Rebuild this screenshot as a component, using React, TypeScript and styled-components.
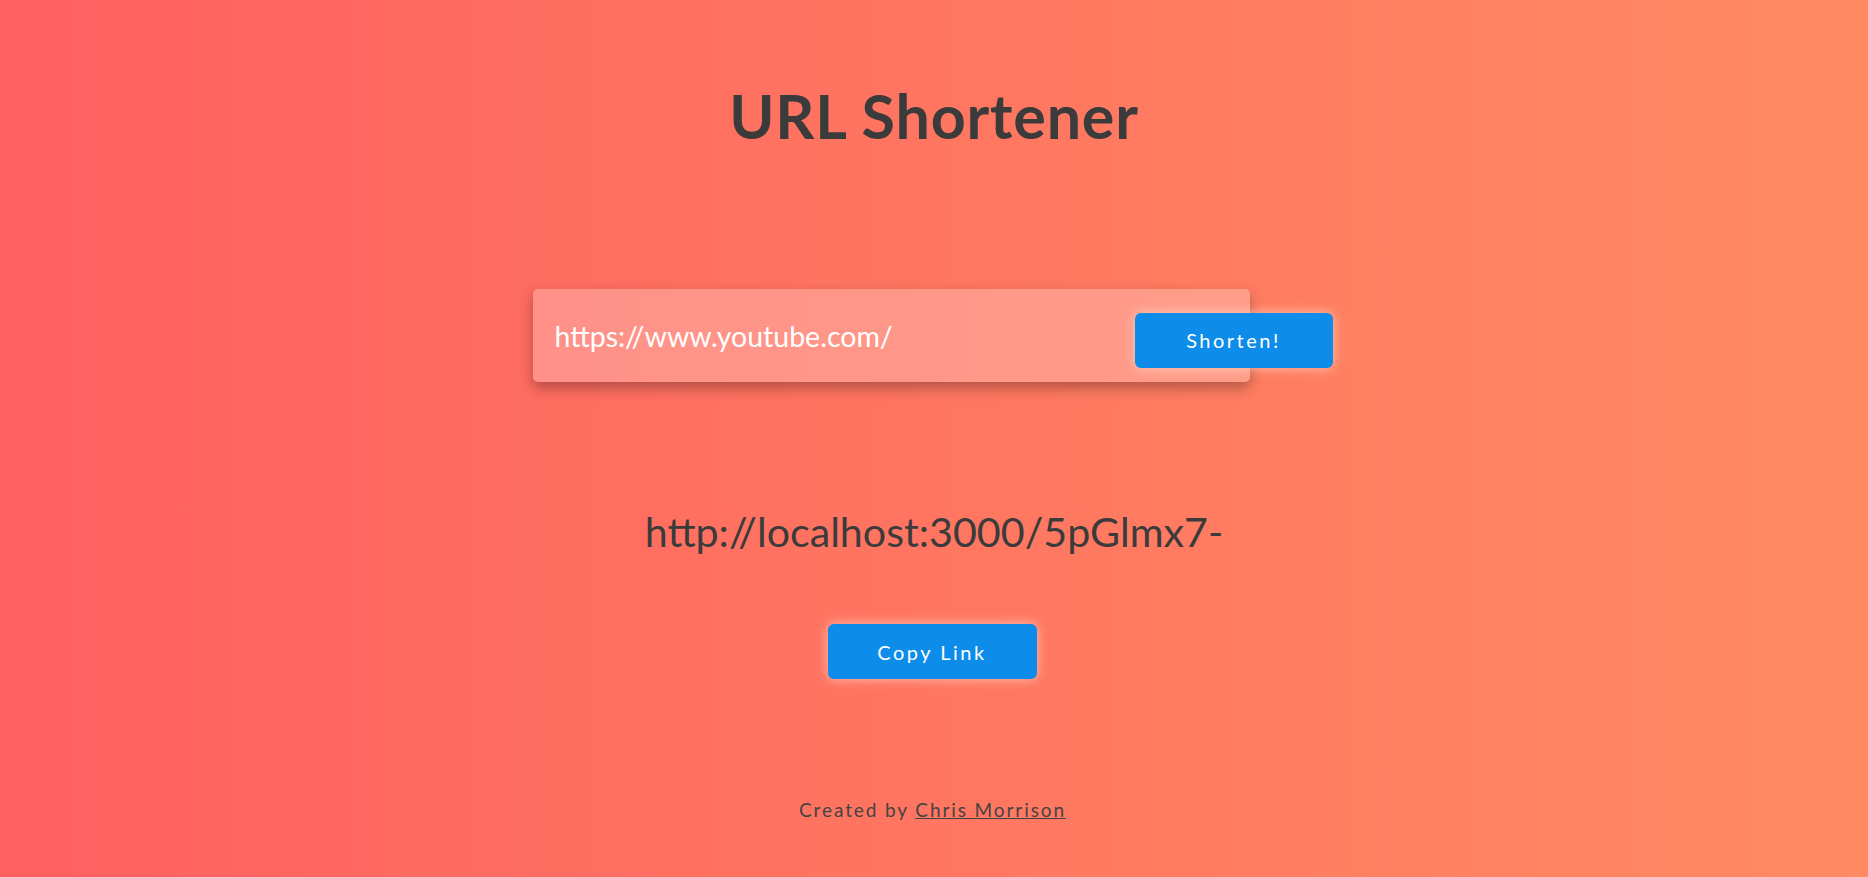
import React from "react";
import styled, { createGlobalStyle } from "styled-components";

const Global = createGlobalStyle`
  html, body { margin: 0; padding: 0; }
  body {
    font-family: Lato, "Open Sans", sans-serif;
    background: linear-gradient(to right, #ff6060, #ff8b62);
    min-height: 100vh;
  }
`;

const Page = styled.main`
  min-height: 877px;
  display: flex;
  flex-direction: column;
  align-items: center;
  box-sizing: border-box;
  padding-top: 72px;
`;

const Title = styled.h1`
  margin: 0;
  font-family: Lato, sans-serif;
  font-weight: 700;
  font-size: 61px;
  line-height: 88px;
  letter-spacing: 0.8px;
  color: #3b3b3b;
`;

const Form = styled.form`
  margin-top: 129px;
  width: 800px;
  display: flex;
  align-items: center;
  margin-left: -3px;
`;

const UrlInput = styled.input`
  flex: 0 0 717px;
  height: 93px;
  box-sizing: border-box;
  border: none;
  outline: none;
  border-radius: 5px;
  padding: 0 22px;
  background: rgba(255, 255, 255, 0.25);
  box-shadow: 0 6px 14px rgba(0, 0, 0, 0.3);
  font-family: Lato, sans-serif;
  font-size: 28.5px;
  color: #ffffff;
`;

const Button = styled.button<{ $w: number }>`
  width: ${(p) => p.$w}px;
  height: 55px;
  border: none;
  border-radius: 6px;
  background: #0d8ce9;
  color: #ffffff;
  font-family: Lato, sans-serif;
  font-size: 20px;
  letter-spacing: 2.5px;
  box-shadow: 0 0 12px rgba(255, 220, 200, 0.75);
  cursor: pointer;
`;

const ShortenButton = styled(Button)`
  margin-left: -115px;
  margin-top: 9px;
  position: relative;
`;

const Result = styled.p`
  margin: 121px 0 0;
  font-family: Lato, sans-serif;
  font-size: 41.2px;
  line-height: 56px;
  color: #3b3b3b;
`;

const CopyButton = styled(Button)`
  margin-top: 65px;
  margin-left: -4px;
`;

const Footer = styled.footer`
  margin-top: 119px;
  margin-left: -3px;
  font-family: Lato, sans-serif;
  font-size: 19px;
  letter-spacing: 1.9px;
  color: #444444;
`;

const Author = styled.a`
  color: #444444;
  text-decoration: underline;
`;

export default function App() {
  return (
    <>
      <Global />
      <Page>
        <Title>URL Shortener</Title>
        <Form onSubmit={(e) => e.preventDefault()}>
          <UrlInput defaultValue="https://www.youtube.com/" />
          <ShortenButton $w={198} type="submit">Shorten!</ShortenButton>
        </Form>
        <Result>http://localhost:3000/5pGlmx7-</Result>
        <CopyButton $w={209} type="button">Copy Link</CopyButton>
        <Footer>
          Created by <Author href="#">Chris Morrison</Author>
        </Footer>
      </Page>
    </>
  );
}
